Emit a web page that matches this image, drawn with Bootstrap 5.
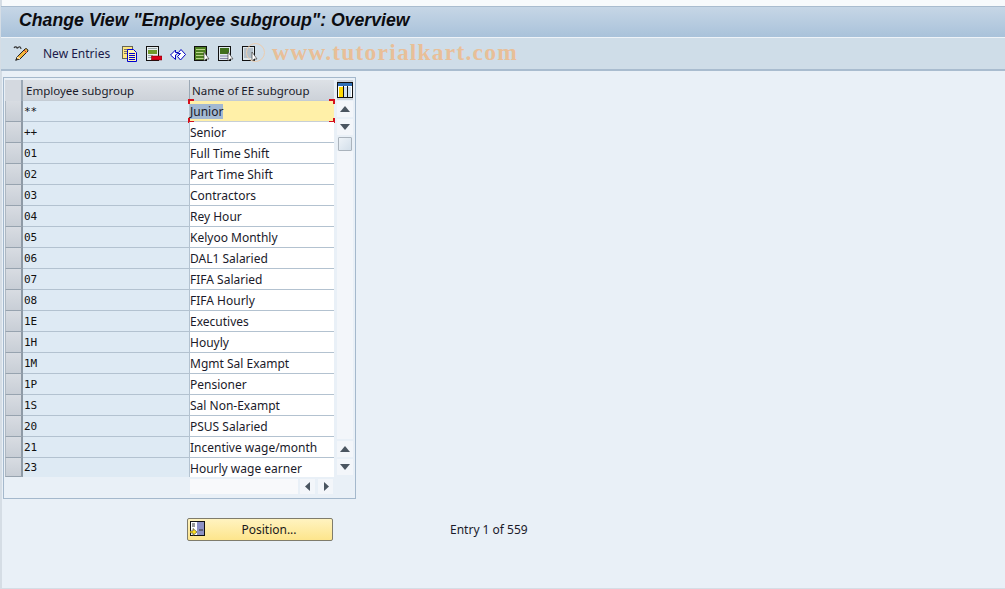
<!DOCTYPE html>
<html lang="en"><head><meta charset="utf-8"><title>Change View</title>
<link rel="stylesheet" href="https://cdn.jsdelivr.net/npm/bootstrap@5.3.0/dist/css/bootstrap.min.css">
<style>
html,body{height:100%}
body{background:#e9f0f7;color:#1a1a2a;font:12px/1 "Noto Sans",sans-serif;overflow:hidden}
.sap-page{height:589px;border-left:2px solid #d5dde5;border-bottom:1px solid #d5dde5;position:relative;padding-top:6px;background:linear-gradient(#f7fafc 0,#f7fafc 6px,#e9f0f7 6px)}
.sap-title{height:32px;margin-left:-1px;background:linear-gradient(#c6d6e6,#a9c2da);border-top:1px solid #a9bccf;border-bottom:1px solid #eef3f8;padding:0 0 3px 18px;font:italic bold 17.7px "Liberation Sans",sans-serif;color:#0c0c10}
.sap-tools{height:33px;margin-left:-1px;background:#cfdde8;border-bottom:2px solid #a9bccf;padding-left:12px}
.sap-new{margin:1px 12px 0 13px;color:#1b1b4a}
.sap-mark{position:absolute;left:270px;top:39px;font:bold 23.5px "Liberation Serif",serif;letter-spacing:1.2px;color:#e8bf98;line-height:26px}
.sap-ring{position:absolute;left:244px;top:43px;width:19px;height:19px;border:1px solid #eccdaf;border-radius:50%}
.sap-panel{width:353px;height:422px;margin:6px 0 0 1px;border:1px solid #a4b8cc;padding:2px 2px 0 1px}
.sap-row{height:21px}
.sap-end{height:19px}
.sap-sel{width:18px;background:linear-gradient(#d8dce2,#c8ced6);border-right:2px solid #8e9aa6;border-bottom:1px solid #97a3af;border-left:1px solid #aeb8c2}
.sap-k{width:166px;background:#deeaf4;border-bottom:1px solid #b3c2d0;font:11px "DejaVu Sans Mono","Liberation Mono",monospace;padding-left:1px;color:#111}
.sap-v{width:145px;background:#fff;border-bottom:1px solid #b3c2d0;border-left:1px solid #b3c2d0;padding:2px 0 0;position:relative}
.sap-end .sap-k,.sap-end .sap-v{border-bottom:0}
.sap-hk,.sap-hv{background:linear-gradient(#dde1e6,#cdd2d9);border-bottom:1px solid #c4ccd4;height:21px;padding-top:2px;font-size:11.5px}
.sap-hk{width:166px;padding-left:3px}
.sap-hv{width:145px;padding-left:2px;border-left:1px solid #9ba8b5}
.sap-hsel{width:18px;background:#d4d9e0;border-right:2px solid #9ba8b5}
.sap-cur{background:#fff0a8;border-bottom:1px solid #c7cfd6;padding-top:1px}
.sap-cur b{font-weight:400;background:#a3b9d2;line-height:15px}
.sap-cor{position:absolute;width:6px;height:5px;border:0 solid #d5101c}
.sap-tl{left:-2px;top:-2px;border-width:2px 0 0 2px}.sap-tr{right:-1px;top:-2px;border-width:2px 2px 0 0}
.sap-bl{left:-2px;bottom:-2px;border-width:0 0 2px 2px}.sap-br{right:-1px;bottom:-2px;border-width:0 2px 2px 0}
.sap-side{width:18px;margin-left:1px}
.sap-cfg{height:20px;background:#ccd2d9;display:flex;align-items:center;justify-content:center}
.sap-sb{width:16px;height:16px;background:#f3f6fa;margin:1px 0 0;display:flex;align-items:center;justify-content:center}
.sap-thumb{width:14px;height:14px;margin:2px 0 0 1px;background:linear-gradient(135deg,#eef3f8,#d3dfea);border:1px solid #aab3bc;border-radius:1px}
.sap-track{width:16px;background:#f3f6fa;height:288px}
.sap-h{margin:2px 0 0 185px;height:15px}
.sap-hbar{width:108px;background:#f8f9fb;margin-right:2px}
.sap-hb{width:15px;background:#f3f6fa;margin-right:3px;display:flex;align-items:center;justify-content:center}
.sap-foot{margin:19px 0 0 185px}
.sap-btn{width:146px;height:23px;padding:1px 0 0 18px;border:1px solid #7f7c6c;border-radius:2px;background:linear-gradient(#fff3c0,#fde58c);color:#1a1a1a;font-size:12px;position:relative}
.sap-btn svg{position:absolute;left:2px;top:2px}
.sap-entry{margin:1px 0 0 117px;color:#1a1a2a}
</style></head><body>
<div class="sap-page">
<div class="sap-title d-flex align-items-center">Change View "Employee subgroup": Overview</div>
<div class="sap-tools d-flex align-items-center">
<svg width="17" height="17" viewBox="0 0 17 17"><path d="M1 3c1-2 3-1 3 0s2-2 3-1 1 1 1 2" fill="none" stroke="#333" stroke-width="1.1"/><path d="M4 12l8-8c1-1 3 0 3 2l-8 8-4 1z" fill="#f4b63c" stroke="#222"/><path d="M11 5l3 3" stroke="#c33"/><path d="M4 12l3 2" stroke="#fff"/><path d="M2 16l1-2 1 1z" fill="#222"/></svg>
<span class="sap-new">New Entries</span>
<div class="d-flex align-items-center" style="gap:8px">
<svg width="16" height="16" viewBox="0 0 16 16"><rect x=".5" y=".5" width="10" height="12" fill="#ffe680" stroke="#665"/><path d="M2 3.500h7M2 5.500h7M2 7.500h7" stroke="#776"/><path d="M5.500 3.500h6l3 3v9h-9z" fill="#fff6b0" stroke="#0000d0"/><path d="M7 7.500h6M7 9.500h6M7 11.500h6M7 13.500h6" stroke="#0000d0"/></svg>
<svg width="16" height="16" viewBox="0 0 16 16"><rect x=".5" y=".5" width="12" height="14" fill="#e8eef0" stroke="#111"/><path d="M2 2.500h9M2 9.500h5M2 11.500h4" stroke="#9aa"/><rect x="2" y="4" width="9" height="4" fill="#6f9a2c"/><rect x="5.500" y="10" width="10.500" height="4" fill="#d9001b" stroke="#700" stroke-width=".5"/></svg>
<svg width="16" height="16" viewBox="0 0 16 16"><path d="M.5 9l5-5v2.500h3L11 3.500l4.500 5-5 5.500-3-3.500 3-3H7.500L5.500 9v4.500z" fill="#fff" stroke="#0000c0"/></svg>
<svg width="16" height="16" viewBox="0 0 16 16"><rect x=".5" y=".5" width="12" height="14" fill="#4d7f22" stroke="#111"/><path d="M2 3.500h9M2 6.500h9M2 9.500h9M2 12.500h9" stroke="#b9d58a"/><path d="M10 6v9l2-2 3 0z" fill="#fff" stroke="#444" stroke-width=".7"/></svg>
<svg width="16" height="16" viewBox="0 0 16 16"><rect x=".5" y=".5" width="12" height="14" fill="#dfe8ec" stroke="#111"/><rect x="2" y="2" width="9" height="6" fill="#3f6f1c"/><path d="M2 10h9M2 12.500h9" stroke="#88a"/><path d="M10 6v9l2-2 3 0z" fill="#fff" stroke="#444" stroke-width=".7"/></svg>
<svg width="16" height="16" viewBox="0 0 16 16"><rect x=".5" y=".5" width="12" height="14" fill="#dfe8ec" stroke="#111"/><path d="M2 3h9M2 5h9M2 7h9M2 9h9M2 11h9" stroke="#8a99a8"/><path d="M10 6v9l2-2 3 0z" fill="#fff" stroke="#444" stroke-width=".7"/></svg>
</div></div>
<span class="sap-ring"></span><span class="sap-mark">www.tutorialkart.com</span>
<div class="sap-panel d-flex">
<div>
<div class="d-flex sap-row"><div class="sap-hsel"></div><div class="sap-hk d-flex align-items-center">Employee subgroup</div><div class="sap-hv d-flex align-items-center">Name of EE subgroup</div></div>
<div class="d-flex sap-row"><div class="sap-sel"></div><div class="sap-k d-flex align-items-center">**</div><div class="sap-v sap-cur d-flex align-items-center"><b>Junior</b><i class="sap-cor sap-tl"></i><i class="sap-cor sap-tr"></i><i class="sap-cor sap-bl"></i><i class="sap-cor sap-br"></i></div></div>
<div class="d-flex sap-row"><div class="sap-sel"></div><div class="sap-k d-flex align-items-center">++</div><div class="sap-v d-flex align-items-center">Senior</div></div>
<div class="d-flex sap-row"><div class="sap-sel"></div><div class="sap-k d-flex align-items-center">01</div><div class="sap-v d-flex align-items-center">Full Time Shift</div></div>
<div class="d-flex sap-row"><div class="sap-sel"></div><div class="sap-k d-flex align-items-center">02</div><div class="sap-v d-flex align-items-center">Part Time Shift</div></div>
<div class="d-flex sap-row"><div class="sap-sel"></div><div class="sap-k d-flex align-items-center">03</div><div class="sap-v d-flex align-items-center">Contractors</div></div>
<div class="d-flex sap-row"><div class="sap-sel"></div><div class="sap-k d-flex align-items-center">04</div><div class="sap-v d-flex align-items-center">Rey Hour</div></div>
<div class="d-flex sap-row"><div class="sap-sel"></div><div class="sap-k d-flex align-items-center">05</div><div class="sap-v d-flex align-items-center">Kelyoo Monthly</div></div>
<div class="d-flex sap-row"><div class="sap-sel"></div><div class="sap-k d-flex align-items-center">06</div><div class="sap-v d-flex align-items-center">DAL1 Salaried</div></div>
<div class="d-flex sap-row"><div class="sap-sel"></div><div class="sap-k d-flex align-items-center">07</div><div class="sap-v d-flex align-items-center">FIFA Salaried</div></div>
<div class="d-flex sap-row"><div class="sap-sel"></div><div class="sap-k d-flex align-items-center">08</div><div class="sap-v d-flex align-items-center">FIFA Hourly</div></div>
<div class="d-flex sap-row"><div class="sap-sel"></div><div class="sap-k d-flex align-items-center">1E</div><div class="sap-v d-flex align-items-center">Executives</div></div>
<div class="d-flex sap-row"><div class="sap-sel"></div><div class="sap-k d-flex align-items-center">1H</div><div class="sap-v d-flex align-items-center">Houyly</div></div>
<div class="d-flex sap-row"><div class="sap-sel"></div><div class="sap-k d-flex align-items-center">1M</div><div class="sap-v d-flex align-items-center">Mgmt Sal Exampt</div></div>
<div class="d-flex sap-row"><div class="sap-sel"></div><div class="sap-k d-flex align-items-center">1P</div><div class="sap-v d-flex align-items-center">Pensioner</div></div>
<div class="d-flex sap-row"><div class="sap-sel"></div><div class="sap-k d-flex align-items-center">1S</div><div class="sap-v d-flex align-items-center">Sal Non-Exampt</div></div>
<div class="d-flex sap-row"><div class="sap-sel"></div><div class="sap-k d-flex align-items-center">20</div><div class="sap-v d-flex align-items-center">PSUS Salaried</div></div>
<div class="d-flex sap-row"><div class="sap-sel"></div><div class="sap-k d-flex align-items-center">21</div><div class="sap-v d-flex align-items-center">Incentive wage/month</div></div>
<div class="d-flex sap-row sap-end"><div class="sap-sel"></div><div class="sap-k d-flex align-items-center">23</div><div class="sap-v d-flex align-items-center">Hourly wage earner</div></div>
<div class="d-flex sap-h"><div class="sap-hbar"></div><div class="sap-hb"><svg width="6" height="9"><path d="M5 0v9L0 4.500z" fill="#4a5560"/></svg></div><div class="sap-hb"><svg width="6" height="9"><path d="M1 0v9l5-4.500z" fill="#4a5560"/></svg></div></div>
</div>
<div class="sap-side">
<div class="sap-cfg"><svg width="16" height="16" viewBox="0 0 16 16"><rect x=".5" y=".5" width="15" height="15" fill="#fff" stroke="#111"/><rect x="1" y="1" width="14" height="3" fill="#2f6fb5"/><rect x="2" y="5" width="4" height="10" fill="#ffd800"/><path d="M6.500 4v11M10.500 4v11" stroke="#111"/><rect x="7" y="5" width="3" height="10" fill="#cfe0ee"/><rect x="11" y="5" width="3" height="10" fill="#cfe0ee"/></svg></div>
<div class="sap-sb"><svg width="10" height="6"><path d="M0 6h10L5 0z" fill="#4a5560"/></svg></div>
<div class="sap-sb" style="margin-top:2px"><svg width="10" height="6"><path d="M0 0h10L5 6z" fill="#4a5560"/></svg></div>
<div class="sap-thumb"></div>
<div class="sap-track"></div>
<div class="sap-sb" style="margin-top:2px"><svg width="10" height="6"><path d="M0 6h10L5 0z" fill="#4a5560"/></svg></div>
<div class="sap-sb" style="margin-top:2px"><svg width="10" height="6"><path d="M0 0h10L5 6z" fill="#4a5560"/></svg></div>
</div>
</div>
<div class="sap-foot d-flex align-items-center">
<button type="button" class="btn sap-btn"><svg width="15" height="15" viewBox="0 0 15 15"><rect x=".5" y=".5" width="14" height="14" fill="#fff" stroke="#111"/><rect x="7" y="1" width="7" height="13" fill="#8c90c4"/><path d="M2 3h3M2 5l3 0M9 9h4" stroke="#333"/><path d="M0 10h3V7.500L7 11l-4 3.500V12H0z" fill="#ffe020" stroke="#333" stroke-width=".6"/></svg>Position...</button>
<span class="sap-entry">Entry 1 of 559</span>
</div>
</div>
</body></html>
